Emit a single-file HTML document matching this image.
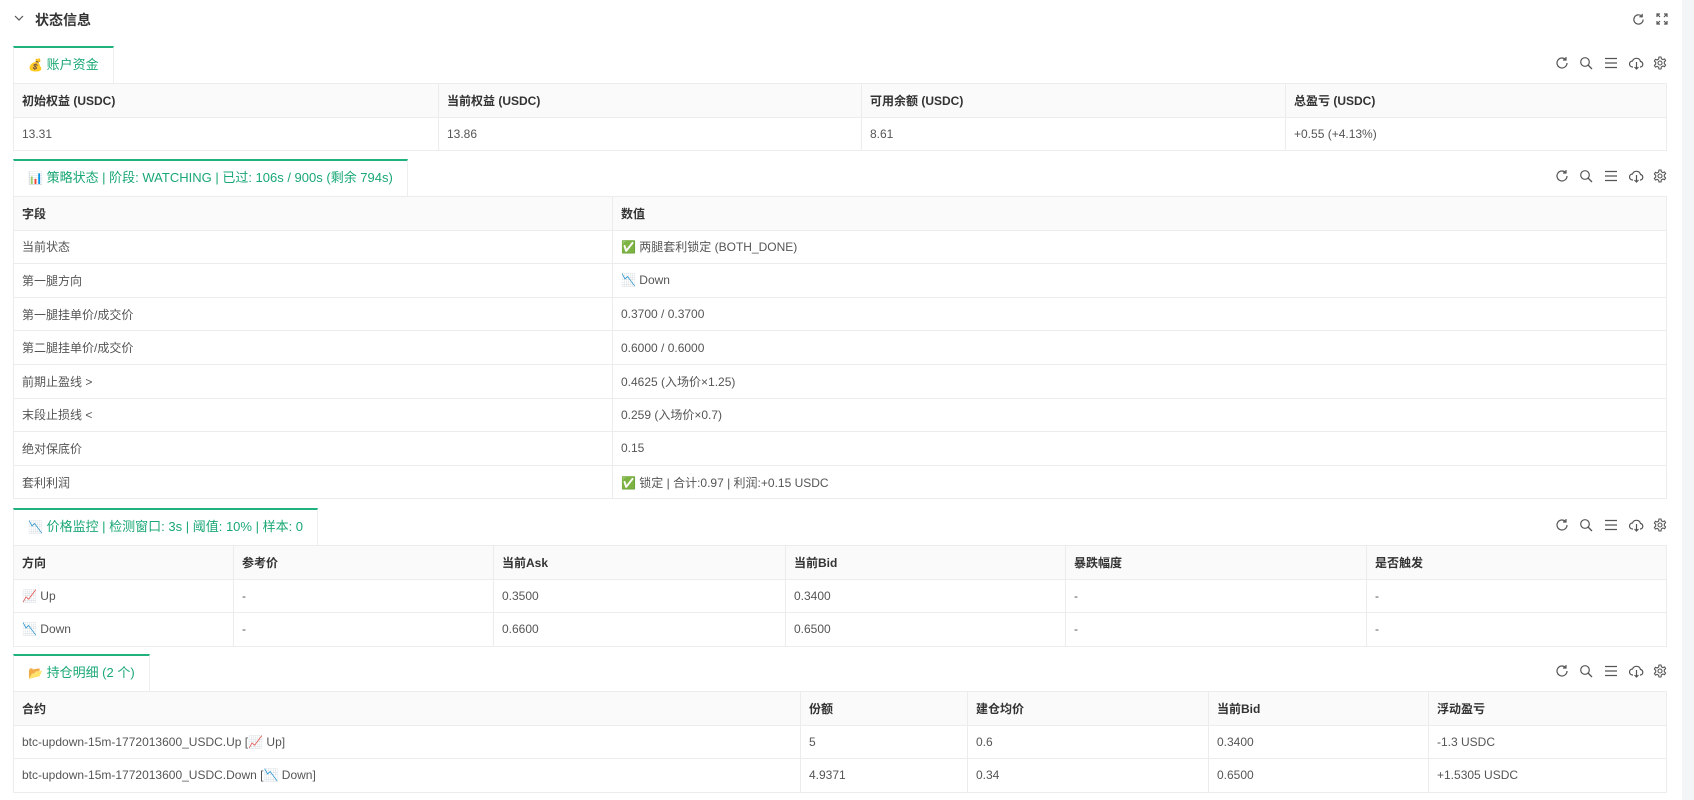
<!DOCTYPE html>
<html><head><meta charset="utf-8"><style>
*{box-sizing:border-box;margin:0;padding:0}
body{width:1694px;height:800px;overflow:hidden;background:#fff;font-family:"Liberation Sans","Noto Sans CJK SC",sans-serif;color:#333;font-size:12px;position:relative}
.strip{position:absolute;left:1682px;top:0;width:12px;height:800px;background:#f4f5f7}
.title{position:absolute;left:35px;top:10px;font-size:14px;font-weight:bold;color:#333}
.chev{position:absolute;left:13px;top:12px}
.sec{position:absolute;left:13px;width:1654px}
.tab{height:37px;border:1px solid #eee;border-top:2px solid #1fb27c;border-bottom:none;color:#1aa874;font-size:13px;padding:0 14px;line-height:34px;display:inline-block;background:#fff}
.tools{position:absolute;right:0;top:10px;height:16px}
.tools svg{position:absolute;top:0}
table{width:1654px;border-collapse:collapse;table-layout:fixed}
td,th{border:1px solid #ececec;height:33.6px;padding:0 8px;text-align:left;white-space:nowrap;overflow:hidden}
th{background:#fafafa;font-weight:bold;color:#333}
td{color:#555}
.e{font-family:"Noto Color Emoji","DejaVu Sans",sans-serif;font-size:12px}
</style></head><body>
<div class="strip"></div>
<svg class="chev" width="12" height="12" viewBox="0 0 12 12"><path d="M2 4l4 4 4-4" fill="none" stroke="#555" stroke-width="1.2"/></svg>
<div class="title">状态信息</div>
<svg style="position:absolute;left:1632px;top:13px" width="13" height="13" viewBox="0 0 14 14"><path d="M12 7a5 5 0 1 1-1.5-3.6M11 1v3h-3" fill="none" stroke="#555" stroke-width="1.3"/></svg>
<svg style="position:absolute;left:1656px;top:13px" width="12" height="12" viewBox="0 0 12 12"><path d="M1 1l3 3M1 4V1h3M11 1l-3 3M8 1h3v3M1 11l3-3M1 8v3h3M11 11l-3-3M8 11h3V8" fill="none" stroke="#555" stroke-width="1.2"/></svg>

<div class="sec" style="top:46px">
<div class="tab"><span class="e">💰</span> 账户资金</div>
<div class="tools"></div>
<table><colgroup><col style="width:425px"><col style="width:423px"><col style="width:424px"><col></colgroup>
<tr><th>初始权益 (USDC)</th><th>当前权益 (USDC)</th><th>可用余额 (USDC)</th><th>总盈亏 (USDC)</th></tr>
<tr><td>13.31</td><td>13.86</td><td>8.61</td><td>+0.55 (+4.13%)</td></tr></table>
</div>

<div class="sec" style="top:159px">
<div class="tab"><span class="e">📊</span> 策略状态 | 阶段: WATCHING | 已过: 106s / 900s (剩余 794s)</div>
<div class="tools"></div>
<table><colgroup><col style="width:599px"><col></colgroup>
<tr><th>字段</th><th>数值</th></tr>
<tr><td>当前状态</td><td><span class="e">✅</span> 两腿套利锁定 (BOTH_DONE)</td></tr>
<tr><td>第一腿方向</td><td><span class="e">📉</span> Down</td></tr>
<tr><td>第一腿挂单价/成交价</td><td>0.3700 / 0.3700</td></tr>
<tr><td>第二腿挂单价/成交价</td><td>0.6000 / 0.6000</td></tr>
<tr><td>前期止盈线 &gt;</td><td>0.4625 (入场价×1.25)</td></tr>
<tr><td>末段止损线 &lt;</td><td>0.259 (入场价×0.7)</td></tr>
<tr><td>绝对保底价</td><td>0.15</td></tr>
<tr><td>套利利润</td><td><span class="e">✅</span> 锁定 | 合计:0.97 | 利润:+0.15 USDC</td></tr></table>
</div>

<div class="sec" style="top:508px">
<div class="tab"><span class="e">📉</span> 价格监控 | 检测窗口: 3s | 阈值: 10% | 样本: 0</div>
<div class="tools"></div>
<table><colgroup><col style="width:220px"><col style="width:260px"><col style="width:292px"><col style="width:280px"><col style="width:301px"><col></colgroup>
<tr><th>方向</th><th>参考价</th><th>当前Ask</th><th>当前Bid</th><th>暴跌幅度</th><th>是否触发</th></tr>
<tr><td><span class="e">📈</span> Up</td><td>-</td><td>0.3500</td><td>0.3400</td><td>-</td><td>-</td></tr>
<tr><td><span class="e">📉</span> Down</td><td>-</td><td>0.6600</td><td>0.6500</td><td>-</td><td>-</td></tr></table>
</div>

<div class="sec" style="top:654px">
<div class="tab"><span class="e">📂</span> 持仓明细 (2 个)</div>
<div class="tools"></div>
<table><colgroup><col style="width:787px"><col style="width:167px"><col style="width:241px"><col style="width:220px"><col></colgroup>
<tr><th>合约</th><th>份额</th><th>建仓均价</th><th>当前Bid</th><th>浮动盈亏</th></tr>
<tr><td>btc-updown-15m-1772013600_USDC.Up [<span class="e">📈</span> Up]</td><td>5</td><td>0.6</td><td>0.3400</td><td>-1.3 USDC</td></tr>
<tr><td>btc-updown-15m-1772013600_USDC.Down [<span class="e">📉</span> Down]</td><td>4.9371</td><td>0.34</td><td>0.6500</td><td>+1.5305 USDC</td></tr></table>
</div>

<script>
var h='<svg style="left:-112px" width="14" height="14" viewBox="0 0 14 14"><path d="M12 7a5 5 0 1 1-1.5-3.6M11 1v3h-3" fill="none" stroke="#555" stroke-width="1.2"/></svg>'+
'<svg style="left:-88px" width="14" height="14" viewBox="0 0 14 14"><circle cx="6" cy="6" r="4.3" fill="none" stroke="#555" stroke-width="1.2"/><path d="M9 9l4 4" stroke="#555" stroke-width="1.3"/></svg>'+
'<svg style="left:-63px" width="14" height="14" viewBox="0 0 14 14"><path d="M1 2.5h12M1 7h12M1 11.5h12" stroke="#555" stroke-width="1.2"/></svg>'+
'<svg style="left:-38px" width="15" height="14" viewBox="0 0 15 14"><path d="M4 11H3.5a3 3 0 0 1 0-6 4.2 4.2 0 0 1 8 0.5 2.8 2.8 0 0 1 0 5.5H11M7.5 6v7M5.5 11l2 2 2-2" fill="none" stroke="#555" stroke-width="1.2"/></svg>'+
'<svg style="left:-14px" width="14" height="14" viewBox="0 0 14 14"><path d="M6 1h2l.4 1.8 1.5.8 1.7-.7 1 1.7-1.3 1.3v1.8l1.3 1.3-1 1.7-1.7-.7-1.5.8L8 13H6l-.4-1.8-1.5-.8-1.7.7-1-1.7 1.3-1.3V6.3L1.4 5l1-1.7 1.7.7 1.5-.8z" fill="none" stroke="#555" stroke-width="1.1"/><circle cx="7" cy="7" r="2" fill="none" stroke="#555" stroke-width="1.1"/></svg>';
document.querySelectorAll('.tools').forEach(function(t){t.innerHTML=h;});
</script>
</body></html>
